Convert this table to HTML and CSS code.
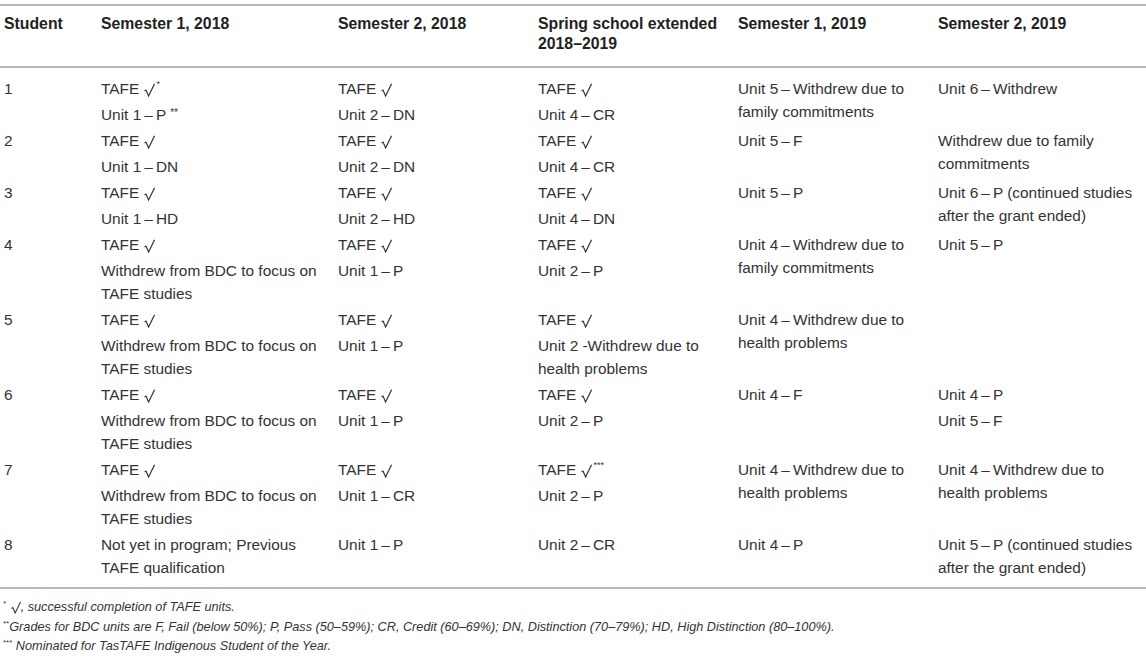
FILE: index.html
```html
<!DOCTYPE html>
<html lang="en">
<head>
<meta charset="utf-8">
<title>Student progress</title>
<link rel="stylesheet" href="styles.css">
</head>
<body>
<div class="page">
<table class="grid">
  <colgroup>
    <col class="c1"><col class="c2"><col class="c3"><col class="c4"><col class="c5"><col class="c6">
  </colgroup>
  <thead>
    <tr>
      <th>Student</th>
      <th>Semester 1, 2018</th>
      <th>Semester 2, 2018</th>
      <th>Spring school extended 2018–2019</th>
      <th>Semester 1, 2019</th>
      <th>Semester 2, 2019</th>
    </tr>
  </thead>
  <tbody>
    <tr>
      <td><p>1</p></td>
      <td><p>TAFE <svg class="ck" viewBox="0 0 12 15" aria-label="√"><polyline points="0.6,8.6 2.2,7.6 5,14 11.5,0.8"/></svg><sup class="fn">*</sup></p><p>Unit 1&#8201;–&#8201;P <sup class="fn2">**</sup></p></td>
      <td><p>TAFE <svg class="ck" viewBox="0 0 12 15" aria-label="√"><polyline points="0.6,8.6 2.2,7.6 5,14 11.5,0.8"/></svg></p><p>Unit 2&#8201;–&#8201;DN</p></td>
      <td><p>TAFE <svg class="ck" viewBox="0 0 12 15" aria-label="√"><polyline points="0.6,8.6 2.2,7.6 5,14 11.5,0.8"/></svg></p><p>Unit 4&#8201;–&#8201;CR</p></td>
      <td><p>Unit 5&#8201;–&#8201;Withdrew due to family commitments</p></td>
      <td><p>Unit 6&#8201;–&#8201;Withdrew</p></td>
    </tr>
    <tr>
      <td><p>2</p></td>
      <td><p>TAFE <svg class="ck" viewBox="0 0 12 15" aria-label="√"><polyline points="0.6,8.6 2.2,7.6 5,14 11.5,0.8"/></svg></p><p>Unit 1&#8201;–&#8201;DN</p></td>
      <td><p>TAFE <svg class="ck" viewBox="0 0 12 15" aria-label="√"><polyline points="0.6,8.6 2.2,7.6 5,14 11.5,0.8"/></svg></p><p>Unit 2&#8201;–&#8201;DN</p></td>
      <td><p>TAFE <svg class="ck" viewBox="0 0 12 15" aria-label="√"><polyline points="0.6,8.6 2.2,7.6 5,14 11.5,0.8"/></svg></p><p>Unit 4&#8201;–&#8201;CR</p></td>
      <td><p>Unit 5&#8201;–&#8201;F</p></td>
      <td><p>Withdrew due to family commitments</p></td>
    </tr>
    <tr>
      <td><p>3</p></td>
      <td><p>TAFE <svg class="ck" viewBox="0 0 12 15" aria-label="√"><polyline points="0.6,8.6 2.2,7.6 5,14 11.5,0.8"/></svg></p><p>Unit 1&#8201;–&#8201;HD</p></td>
      <td><p>TAFE <svg class="ck" viewBox="0 0 12 15" aria-label="√"><polyline points="0.6,8.6 2.2,7.6 5,14 11.5,0.8"/></svg></p><p>Unit 2&#8201;–&#8201;HD</p></td>
      <td><p>TAFE <svg class="ck" viewBox="0 0 12 15" aria-label="√"><polyline points="0.6,8.6 2.2,7.6 5,14 11.5,0.8"/></svg></p><p>Unit 4&#8201;–&#8201;DN</p></td>
      <td><p>Unit 5&#8201;–&#8201;P</p></td>
      <td><p>Unit 6&#8201;–&#8201;P (continued studies after the grant ended)</p></td>
    </tr>
    <tr>
      <td><p>4</p></td>
      <td><p>TAFE <svg class="ck" viewBox="0 0 12 15" aria-label="√"><polyline points="0.6,8.6 2.2,7.6 5,14 11.5,0.8"/></svg></p><p>Withdrew from BDC to focus on TAFE studies</p></td>
      <td><p>TAFE <svg class="ck" viewBox="0 0 12 15" aria-label="√"><polyline points="0.6,8.6 2.2,7.6 5,14 11.5,0.8"/></svg></p><p>Unit 1&#8201;–&#8201;P</p></td>
      <td><p>TAFE <svg class="ck" viewBox="0 0 12 15" aria-label="√"><polyline points="0.6,8.6 2.2,7.6 5,14 11.5,0.8"/></svg></p><p>Unit 2&#8201;–&#8201;P</p></td>
      <td><p>Unit 4&#8201;–&#8201;Withdrew due to family commitments</p></td>
      <td><p>Unit 5&#8201;–&#8201;P</p></td>
    </tr>
    <tr>
      <td><p>5</p></td>
      <td><p>TAFE <svg class="ck" viewBox="0 0 12 15" aria-label="√"><polyline points="0.6,8.6 2.2,7.6 5,14 11.5,0.8"/></svg></p><p>Withdrew from BDC to focus on TAFE studies</p></td>
      <td><p>TAFE <svg class="ck" viewBox="0 0 12 15" aria-label="√"><polyline points="0.6,8.6 2.2,7.6 5,14 11.5,0.8"/></svg></p><p>Unit 1&#8201;–&#8201;P</p></td>
      <td><p>TAFE <svg class="ck" viewBox="0 0 12 15" aria-label="√"><polyline points="0.6,8.6 2.2,7.6 5,14 11.5,0.8"/></svg></p><p>Unit 2 -Withdrew due to health problems</p></td>
      <td><p>Unit 4&#8201;–&#8201;Withdrew due to health problems</p></td>
      <td></td>
    </tr>
    <tr>
      <td><p>6</p></td>
      <td><p>TAFE <svg class="ck" viewBox="0 0 12 15" aria-label="√"><polyline points="0.6,8.6 2.2,7.6 5,14 11.5,0.8"/></svg></p><p>Withdrew from BDC to focus on TAFE studies</p></td>
      <td><p>TAFE <svg class="ck" viewBox="0 0 12 15" aria-label="√"><polyline points="0.6,8.6 2.2,7.6 5,14 11.5,0.8"/></svg></p><p>Unit 1&#8201;–&#8201;P</p></td>
      <td><p>TAFE <svg class="ck" viewBox="0 0 12 15" aria-label="√"><polyline points="0.6,8.6 2.2,7.6 5,14 11.5,0.8"/></svg></p><p>Unit 2&#8201;–&#8201;P</p></td>
      <td><p>Unit 4&#8201;–&#8201;F</p></td>
      <td><p>Unit 4&#8201;–&#8201;P</p><p>Unit 5&#8201;–&#8201;F</p></td>
    </tr>
    <tr>
      <td><p>7</p></td>
      <td><p>TAFE <svg class="ck" viewBox="0 0 12 15" aria-label="√"><polyline points="0.6,8.6 2.2,7.6 5,14 11.5,0.8"/></svg></p><p>Withdrew from BDC to focus on TAFE studies</p></td>
      <td><p>TAFE <svg class="ck" viewBox="0 0 12 15" aria-label="√"><polyline points="0.6,8.6 2.2,7.6 5,14 11.5,0.8"/></svg></p><p>Unit 1&#8201;–&#8201;CR</p></td>
      <td><p>TAFE <svg class="ck" viewBox="0 0 12 15" aria-label="√"><polyline points="0.6,8.6 2.2,7.6 5,14 11.5,0.8"/></svg><sup class="fn">***</sup></p><p>Unit 2&#8201;–&#8201;P</p></td>
      <td><p>Unit 4&#8201;–&#8201;Withdrew due to health problems</p></td>
      <td><p>Unit 4&#8201;–&#8201;Withdrew due to health problems</p></td>
    </tr>
    <tr class="last">
      <td><p>8</p></td>
      <td><p>Not yet in program; Previous TAFE qualification</p></td>
      <td><p>Unit 1&#8201;–&#8201;P</p></td>
      <td><p>Unit 2&#8201;–&#8201;CR</p></td>
      <td><p>Unit 4&#8201;–&#8201;P</p></td>
      <td><p>Unit 5&#8201;–&#8201;P (continued studies after the grant ended)</p></td>
    </tr>
  </tbody>
</table>
<div class="notes">
  <p><sup class="nm">*</sup> <svg class="ck ck-sm" viewBox="0 0 12 15" aria-label="√"><polyline points="0.6,8.6 2.2,7.6 5,14 11.5,0.8"/></svg>, successful completion of TAFE units.</p>
  <p><sup class="nm">**</sup>Grades for BDC units are F, Fail (below 50%); P, Pass (50–59%); CR, Credit (60–69%); DN, Distinction (70–79%); HD, High Distinction (80–100%).</p>
  <p><sup class="nm">***</sup> Nominated for TasTAFE Indigenous Student of the Year.</p>
</div>
</div>
</body>
</html>
```

FILE: styles.css
```css
html, body {
  margin: 0;
  padding: 0;
  background: #ffffff;
}

body {
  font-family: "Liberation Sans", Arial, sans-serif;
  color: #333333;
}

.page {
  padding-top: 4px;
  width: 1146px;
}

.grid {
  width: 1146px;
  border-collapse: collapse;
  table-layout: fixed;
  font-size: 15.4px;
}

.c1 { width: 97px; }
.c2 { width: 237px; }
.c3 { width: 200px; }
.c4 { width: 200px; }
.c5 { width: 200px; }
.c6 { width: 212px; }

.grid th {
  text-align: left;
  vertical-align: top;
  font-weight: bold;
  font-size: 15.8px;
  line-height: 20px;
  color: #222222;
  padding: 8px 4px 12px 4px;
  border-top: 2px solid #b8b8b8;
  border-bottom: 2px solid #b8b8b8;
}

.grid td {
  vertical-align: top;
  padding: 1px 4px 2px 4px;
  line-height: 23px;
}

.grid tbody tr:first-child td {
  padding-top: 9px;
}

.grid tr.last td {
  padding-bottom: 8px;
  border-bottom: 2px solid #b8b8b8;
}

.grid p {
  margin: 0;
}

.grid p + p {
  margin-top: 3px;
}

.ck {
  width: 11px;
  height: 14px;
  vertical-align: -3px;
  margin-left: 1px;
  fill: none;
  stroke: #333333;
  stroke-width: 1.3;
  stroke-linejoin: miter;
  stroke-linecap: butt;
}

.ck-sm {
  width: 10px;
  height: 13px;
  vertical-align: -3px;
}

.fn {
  font-size: 9px;
  vertical-align: 7px;
  line-height: 0;
  margin-left: 1px;
}

.fn2 {
  font-size: 10px;
  vertical-align: 4px;
  line-height: 0;
}

.notes {
  padding: 9px 0 0 3px;
  font-size: 12.7px;
  font-style: italic;
  line-height: 19.5px;
}

.notes p {
  margin: 0;
}

.nm {
  font-size: 8px;
  vertical-align: 5px;
  line-height: 0;
  font-style: normal;
}
```
